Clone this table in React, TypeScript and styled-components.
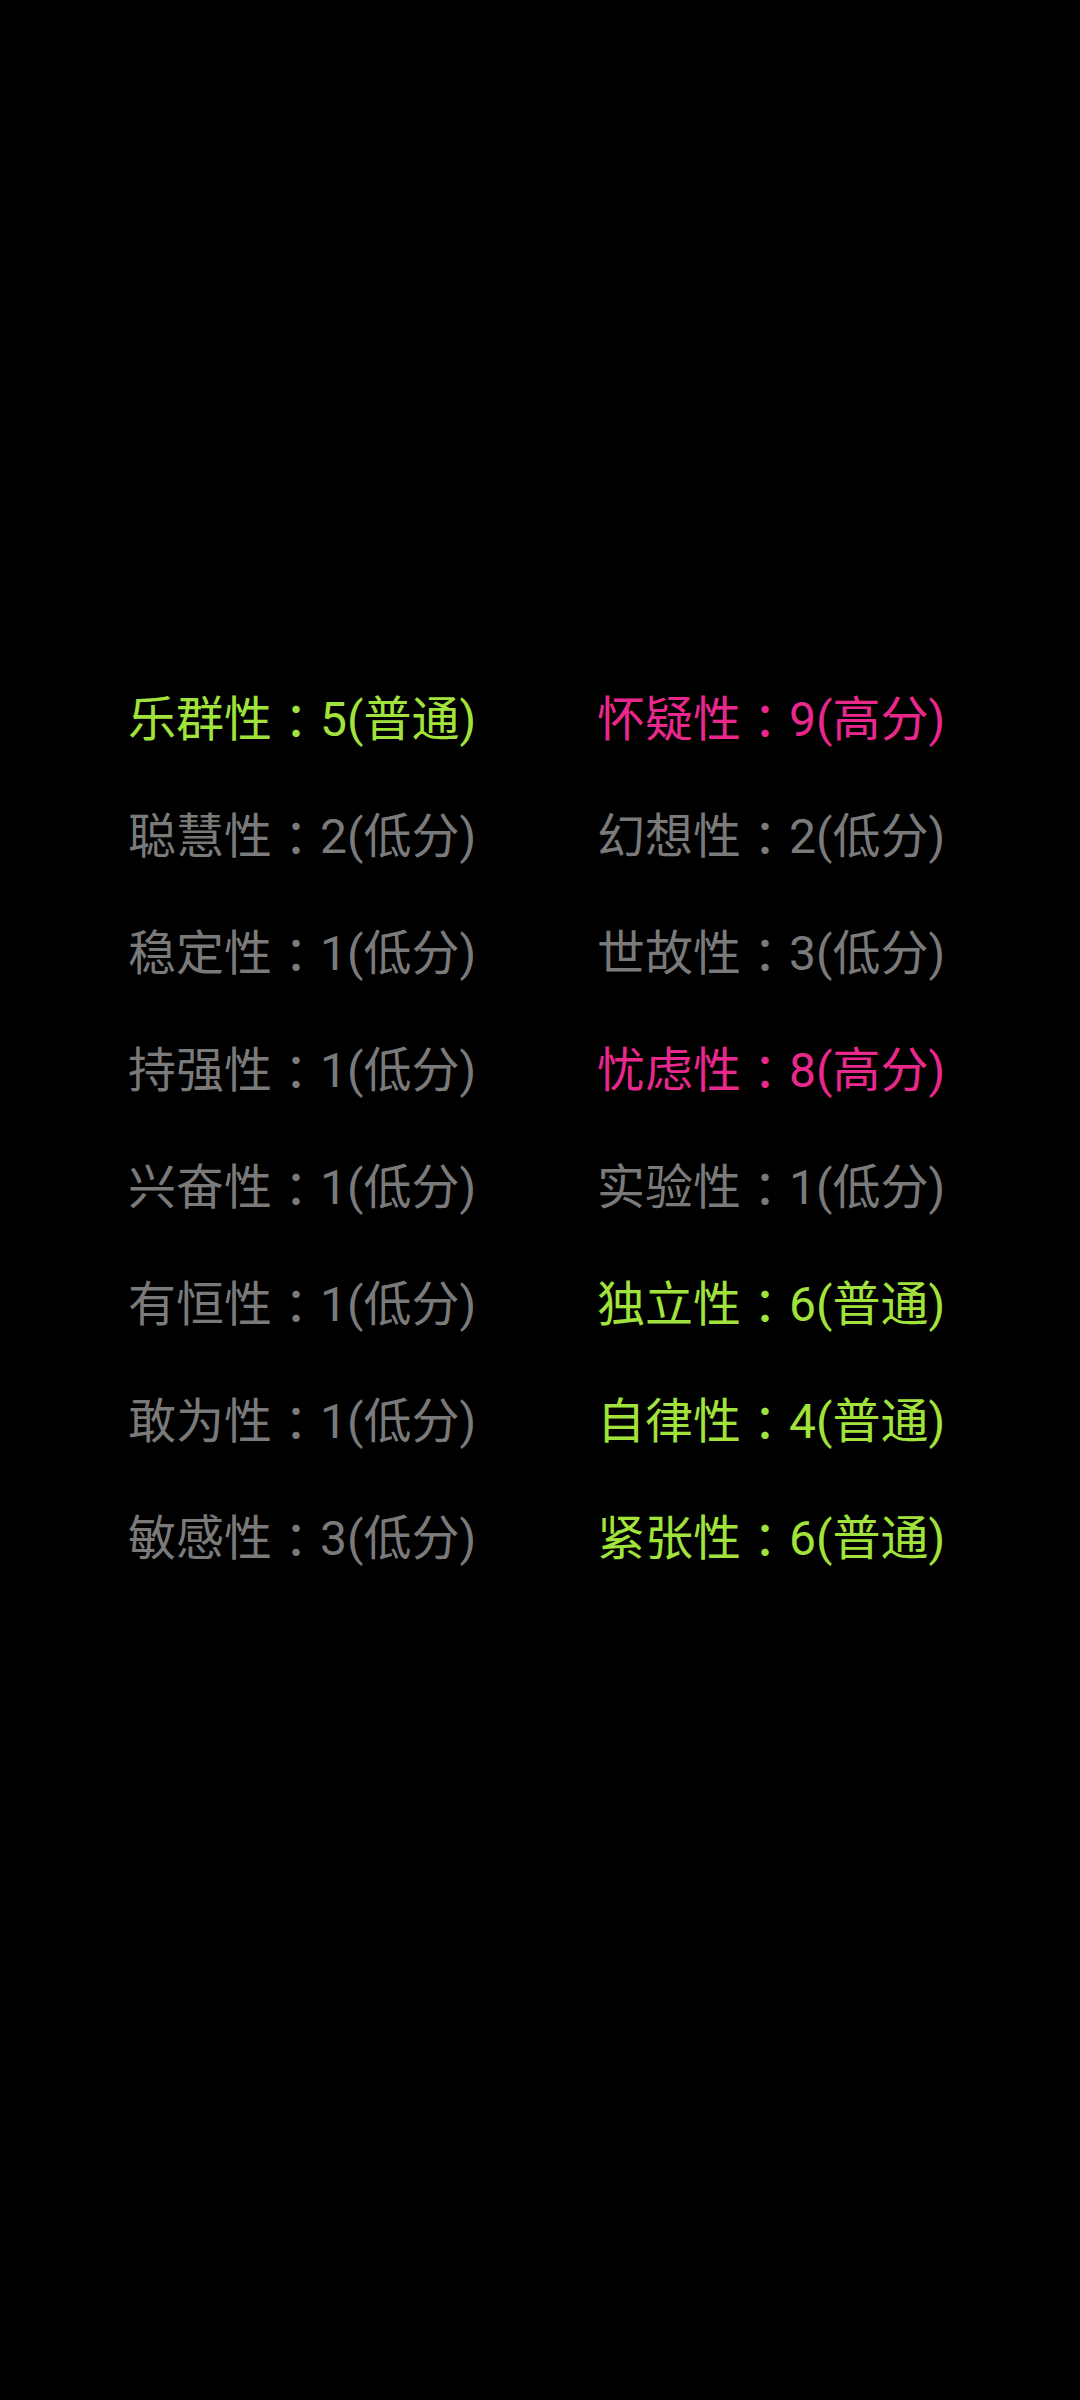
import React from "react";
import styled, { createGlobalStyle } from "styled-components";

const Global = createGlobalStyle`
  html, body { margin: 0; padding: 0; background: #000; }
  body { width: 1080px; height: 2400px; overflow: hidden; }
`;

type Tone = "high" | "mid" | "low";

const toneColor: Record<Tone, string> = {
  high: "#e8288c",
  mid: "#a2e23c",
  low: "#7a7a7a",
};

const Screen = styled.main`
  width: 1080px;
  height: 2400px;
  background: #000;
  box-sizing: border-box;
  padding-top: 660px;
  padding-left: 128px;
`;

const Grid = styled.div`
  display: grid;
  grid-template-columns: 469px 400px;
  grid-auto-rows: 117px;
`;

const Item = styled.div<{ $tone: Tone }>`
  font-family: Roboto, "Noto Sans CJK SC", sans-serif;
  font-size: 48px;
  line-height: 117px;
  height: 117px;
  white-space: nowrap;
  color: ${(p) => toneColor[p.$tone]};
`;

const Colon = styled.span`
  font-family: "Noto Sans CJK TC", sans-serif;
  vertical-align: -3px;
`;

const items: { name: string; score: number; level: string; tone: Tone }[] = [
  { name: "乐群性", score: 5, level: "普通", tone: "mid" },
  { name: "怀疑性", score: 9, level: "高分", tone: "high" },
  { name: "聪慧性", score: 2, level: "低分", tone: "low" },
  { name: "幻想性", score: 2, level: "低分", tone: "low" },
  { name: "稳定性", score: 1, level: "低分", tone: "low" },
  { name: "世故性", score: 3, level: "低分", tone: "low" },
  { name: "持强性", score: 1, level: "低分", tone: "low" },
  { name: "忧虑性", score: 8, level: "高分", tone: "high" },
  { name: "兴奋性", score: 1, level: "低分", tone: "low" },
  { name: "实验性", score: 1, level: "低分", tone: "low" },
  { name: "有恒性", score: 1, level: "低分", tone: "low" },
  { name: "独立性", score: 6, level: "普通", tone: "mid" },
  { name: "敢为性", score: 1, level: "低分", tone: "low" },
  { name: "自律性", score: 4, level: "普通", tone: "mid" },
  { name: "敏感性", score: 3, level: "低分", tone: "low" },
  { name: "紧张性", score: 6, level: "普通", tone: "mid" },
];

export default function App() {
  return (
    <>
      <Global />
      <Screen>
        <Grid>
          {items.map((it) => (
            <Item key={it.name} $tone={it.tone}>
              {it.name}
              <Colon>：</Colon>
              {it.score}({it.level})
            </Item>
          ))}
        </Grid>
      </Screen>
    </>
  );
}
